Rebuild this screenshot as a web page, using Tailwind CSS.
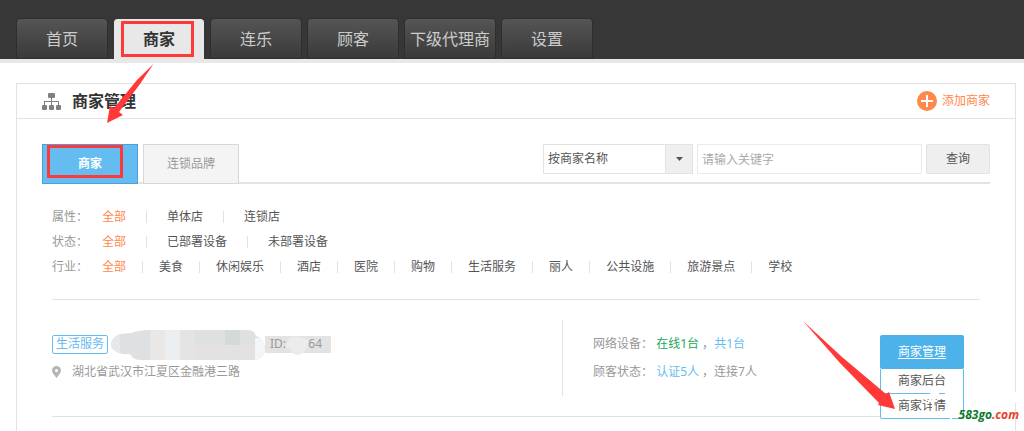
<!DOCTYPE html>
<html lang="zh-CN">
<head>
    <meta charset="UTF-8">
    <meta name="viewport" content="width=device-width, initial-scale=1.0">
    <title>商家管理</title>
    <script src="https://cdn.jsdelivr.net/npm/@tailwindcss/browser@4"></script>
</head>
<body class="relative flex min-h-screen flex-col overflow-x-hidden bg-white font-['Noto_Sans','Noto_Sans_CJK_SC',sans-serif] text-xs text-[#555]">
    <header class="border-b-4 border-[#e8e8e8] bg-[#373737] pt-[18px]">
        <nav class="flex gap-[5px] px-4 text-base text-[#ccc]">
            <a href="#" class="flex h-[41px] w-[92px] items-center justify-center rounded-t border border-[#2e2e2e] bg-linear-to-b from-[#555] to-[#3a3a3a]">首页</a>
            <a href="#" class="flex h-[41px] w-[92px] items-center justify-center rounded-t border-x border-t border-[#373737] bg-[#e8e8e8] bg-clip-padding pr-1 font-bold text-[#333]">
                <span class="flex h-9 w-[73px] items-center justify-center border-3 border-[#ff3838] pl-1">商家</span>
            </a>
            <a href="#" class="flex h-[41px] w-[92px] items-center justify-center rounded-t border border-[#2e2e2e] bg-linear-to-b from-[#555] to-[#3a3a3a]">连乐</a>
            <a href="#" class="flex h-[41px] w-[92px] items-center justify-center rounded-t border border-[#2e2e2e] bg-linear-to-b from-[#555] to-[#3a3a3a]">顾客</a>
            <a href="#" class="flex h-[41px] w-[92px] items-center justify-center rounded-t border border-[#2e2e2e] bg-linear-to-b from-[#555] to-[#3a3a3a]">下级代理商</a>
            <a href="#" class="flex h-[41px] w-[92px] items-center justify-center rounded-t border border-[#2e2e2e] bg-linear-to-b from-[#555] to-[#3a3a3a]">设置</a>
        </nav>
    </header>

    <main class="mt-5 mr-2 ml-4 flex-1 border border-b-0 border-[#e3e3e3]">
        <div class="flex h-[35px] items-center justify-between border-b border-[#e3e3e3] px-[25px]">
            <div class="flex items-center gap-[11px]">
                <svg class="h-[18px] w-[19px]" viewBox="0 0 19 18" fill="#808080">
                    <rect x="6" y="1" width="7" height="5" rx="1"/>
                    <path d="M9 6h1v3h7v4h-1v-3h-6v3H9v-3H3v3H2V9h7z"/>
                    <rect x="0" y="13" width="5" height="5" rx="1"/>
                    <rect x="7" y="13" width="5" height="5" rx="1"/>
                    <rect x="14" y="13" width="5" height="5" rx="1"/>
                </svg>
                <h1 class="text-base font-bold text-[#333]">商家管理</h1>
            </div>
            <a href="#" class="flex items-center gap-[5px] text-[#ff884d]">
                <svg class="size-5" viewBox="0 0 20 20">
                    <circle cx="10" cy="10" r="10" fill="#ff884d"/>
                    <path d="M4 10h12M10 4v12" stroke="#fff" stroke-width="2"/>
                </svg>
                添加商家
            </a>
        </div>

        <div class="mx-[25px] mt-[25px] flex h-10 items-start justify-between border-b-2 border-[#e3e3e3]">
            <div class="flex gap-[5px]">
                <a href="#" class="flex h-10 w-24 border border-[#4c9fdc] bg-[#64bcf1] pl-1 font-bold text-white">
                    <span class="flex h-[33px] w-19 items-center justify-center border-3 border-[#ff3838] pt-1 pl-[10px]">商家</span>
                </a>
                <a href="#" class="flex h-10 w-24 items-center justify-center border border-[#d8d8d8] bg-[#f4f4f4] text-[#999]">连锁品牌</a>
            </div>
            <form class="flex gap-1">
                <div class="relative flex">
                    <select aria-label="查询方式" class="h-[30px] w-[150px] appearance-none border border-[#e3e3e3] bg-white px-1 text-[#555]">
                        <option>按商家名称</option>
                        <option>按商家ID</option>
                    </select>
                    <span class="pointer-events-none absolute inset-y-px right-px flex w-[27px] items-center justify-center border-l border-[#e3e3e3] bg-[#efefef]">
                        <svg class="h-1 w-[7px]" viewBox="0 0 7 4" fill="#555"><path d="M0 0h7L3.500 4z"/></svg>
                    </span>
                </div>
                <input type="text" aria-label="关键字" placeholder="请输入关键字" class="h-[30px] w-[225px] border border-[#eaeaea] px-1 placeholder:text-[#aaa]">
                <button type="button" class="h-[30px] w-16 rounded-xs border border-[#e3e3e3] bg-[#efefef] text-[#555]">查询</button>
            </form>
        </div>

        <div class="mx-[35px] border-b border-[#e3e3e3] pt-5 pb-5">
            <div class="flex h-[25px] items-center gap-5">
                <span class="-mr-5 w-[50px] text-[#999]">属性：</span>
                <a href="#" class="text-[#ff884d]">全部</a>
                <i class="h-3 w-px bg-[#dde5dd]"></i>
                <a href="#">单体店</a>
                <i class="h-3 w-px bg-[#dde5dd]"></i>
                <a href="#">连锁店</a>
            </div>
            <div class="flex h-[25px] items-center gap-5">
                <span class="-mr-5 w-[50px] text-[#999]">状态：</span>
                <a href="#" class="text-[#ff884d]">全部</a>
                <i class="h-3 w-px bg-[#dde5dd]"></i>
                <a href="#">已部署设备</a>
                <i class="h-3 w-px bg-[#dde5dd]"></i>
                <a href="#">未部署设备</a>
            </div>
            <div class="flex h-[25px] items-center gap-4">
                <span class="-mr-4 w-[50px] text-[#999]">行业：</span>
                <a href="#" class="text-[#ff884d]">全部</a>
                <i class="h-3 w-px bg-[#dde5dd]"></i>
                <a href="#">美食</a>
                <i class="h-3 w-px bg-[#dde5dd]"></i>
                <a href="#">休闲娱乐</a>
                <i class="h-3 w-px bg-[#dde5dd]"></i>
                <a href="#">酒店</a>
                <i class="h-3 w-px bg-[#dde5dd]"></i>
                <a href="#">医院</a>
                <i class="h-3 w-px bg-[#dde5dd]"></i>
                <a href="#">购物</a>
                <i class="h-3 w-px bg-[#dde5dd]"></i>
                <a href="#">生活服务</a>
                <i class="h-3 w-px bg-[#dde5dd]"></i>
                <a href="#">丽人</a>
                <i class="h-3 w-px bg-[#dde5dd]"></i>
                <a href="#">公共设施</a>
                <i class="h-3 w-px bg-[#dde5dd]"></i>
                <a href="#">旅游景点</a>
                <i class="h-3 w-px bg-[#dde5dd]"></i>
                <a href="#">学校</a>
            </div>
        </div>

        <div class="mx-[35px] flex border-b border-[#e3e3e3] py-5 text-[#999]">
            <div class="flex flex-1 flex-col gap-1 pt-[10px]">
                <div class="flex h-7 items-center">
                    <span class="flex h-[19px] items-center rounded-xs border border-[#64bcf1] px-[3px] text-[#64bcf1]">生活服务</span>
                    <!-- masked shop name -->
                    <svg class="ml-[3px] h-8 w-[154px]" viewBox="0 -2 154 32">
                        <defs>
                            <clipPath id="mask">
                                <path d="M0 14Q1 7 9 4L20 3Q28 0 38 0H138Q144 1 145 6Q150 7 152 12Q156 19 152 25Q149 30 142 30H30Q22 30 19 24Q8 25 3 20Q0 18 0 14Z"/>
                            </clipPath>
                        </defs>
                        <g clip-path="url(#mask)">
                            <path fill="#dfe0e1" d="M0 0h154v32H0z"/>
                            <path fill="#e3e8ec" d="M0 0h9v32H0z"/>
                            <path fill="#e8e8e7" d="M39 0h15v15H39z"/>
                            <path fill="#eceff2" d="M54 0h15v32H54z"/>
                            <path fill="#e4e4e5" d="M69 0h15v32H69z"/>
                            <path fill="#d5d9da" d="M114 0h15v15h-15z"/>
                            <path fill="#ebe7e4" d="M39 15h15v16H39z"/>
                            <path fill="#e3e1e2" d="M84 15h60v16H84z"/>
                            <path fill="#f3f5f7" d="M144 8h10v24h-10z"/>
                        </g>
                    </svg>
                    <span class="relative flex h-[17px] w-[66px] items-center justify-between bg-[#e3e3e3] pr-[9px] pl-[5px]">
                        <span>ID:4</span><span>64</span>
                        <svg class="absolute top-0 left-5 h-5 w-6" viewBox="0 0 24 20" fill="#ececec"><path d="M5 1Q14-1 23 4Q23 16 14 19Q8 20 5 12L0 11Z"/></svg>
                    </span>
                </div>
                <div class="flex h-5 items-center gap-[11px]">
                    <svg class="h-3 w-[9px]" viewBox="0 0 9 12" fill="#b4b4b4"><path fill-rule="evenodd" d="M4.500 0A4.500 4.500 0 0 0 0 4.500C0 7 2.500 9 4.500 12C6.500 9 9 7 9 4.500A4.500 4.500 0 0 0 4.500 0ZM4.500 3a1.600 1.600 0 1 1 0 3.200a1.600 1.600 0 0 1 0-3.200Z"/></svg>
                    <span>湖北省武汉市江夏区金融港三路</span>
                </div>
            </div>
            <div class="flex h-[76px] w-[318px] flex-col gap-2 border-l border-[#e3e3e3] pt-[14px] pl-[30px]">
                <p class="h-5 leading-5">网络设备： <span class="text-[#20a85a]">在线1台</span> ，<span class="text-[#64bcf1]">共1台</span></p>
                <p class="h-5 leading-5">顾客状态： <span class="text-[#64bcf1]">认证5人</span> ，连接7人</p>
            </div>
            <div class="relative mr-4 w-[84px] pt-[15px] text-center">
                <button type="button" class="h-[34px] w-full rounded-xs bg-[#4cb2e9] text-white underline underline-offset-2">商家管理</button>
                <div class="absolute inset-x-0 top-[49px] rounded-b-xs border border-t-0 border-[#64bcf1] bg-white text-[#555]">
                    <a href="#" class="block h-[25px] border-b border-[#64bcf1] leading-6">商家后台</a>
                    <a href="#" class="block h-6 leading-6">商家详情</a>
                </div>
            </div>
        </div>
    </main>

    <!-- pointer arrows -->
    <svg class="pointer-events-none absolute top-[60px] left-[100px] h-16 w-16" viewBox="100 60 64 64" fill="#ff3838">
        <path d="M153.500 64L137 80L114 108L110 106L107 123L123 115L119 112L140 84Z"/>
    </svg>
    <svg class="pointer-events-none absolute top-80 right-32 h-[92px] w-[96px]" viewBox="800 320 96 92" fill="#ff3838">
        <path d="M803 321L840 363L879 403L878 405L895 409L889 392L886 394L842 357Z"/>
    </svg>

    <!-- site watermark -->
    <div class="pointer-events-none absolute top-[392px] right-[5px] flex w-[92px] flex-col items-end">
        <svg class="h-3 w-full overflow-visible" viewBox="0 0 92 12" fill="none" stroke="#fff" stroke-width="2">
            <path d="M3 1h9M6 0v16M1 9h9M18 1h18M24 0v27M14 6h14M16 20l12-8M41 1h12M60 3h32"/>
            <path d="M88 0v11" stroke-width="7"/>
        </svg>
        <span class="pt-px font-['Open_Sans'] text-xs leading-5 font-bold text-[#e8402a] italic"><span class="text-[#0a7a2c]">583go</span>.com</span>
    </div>
</body>
</html>
